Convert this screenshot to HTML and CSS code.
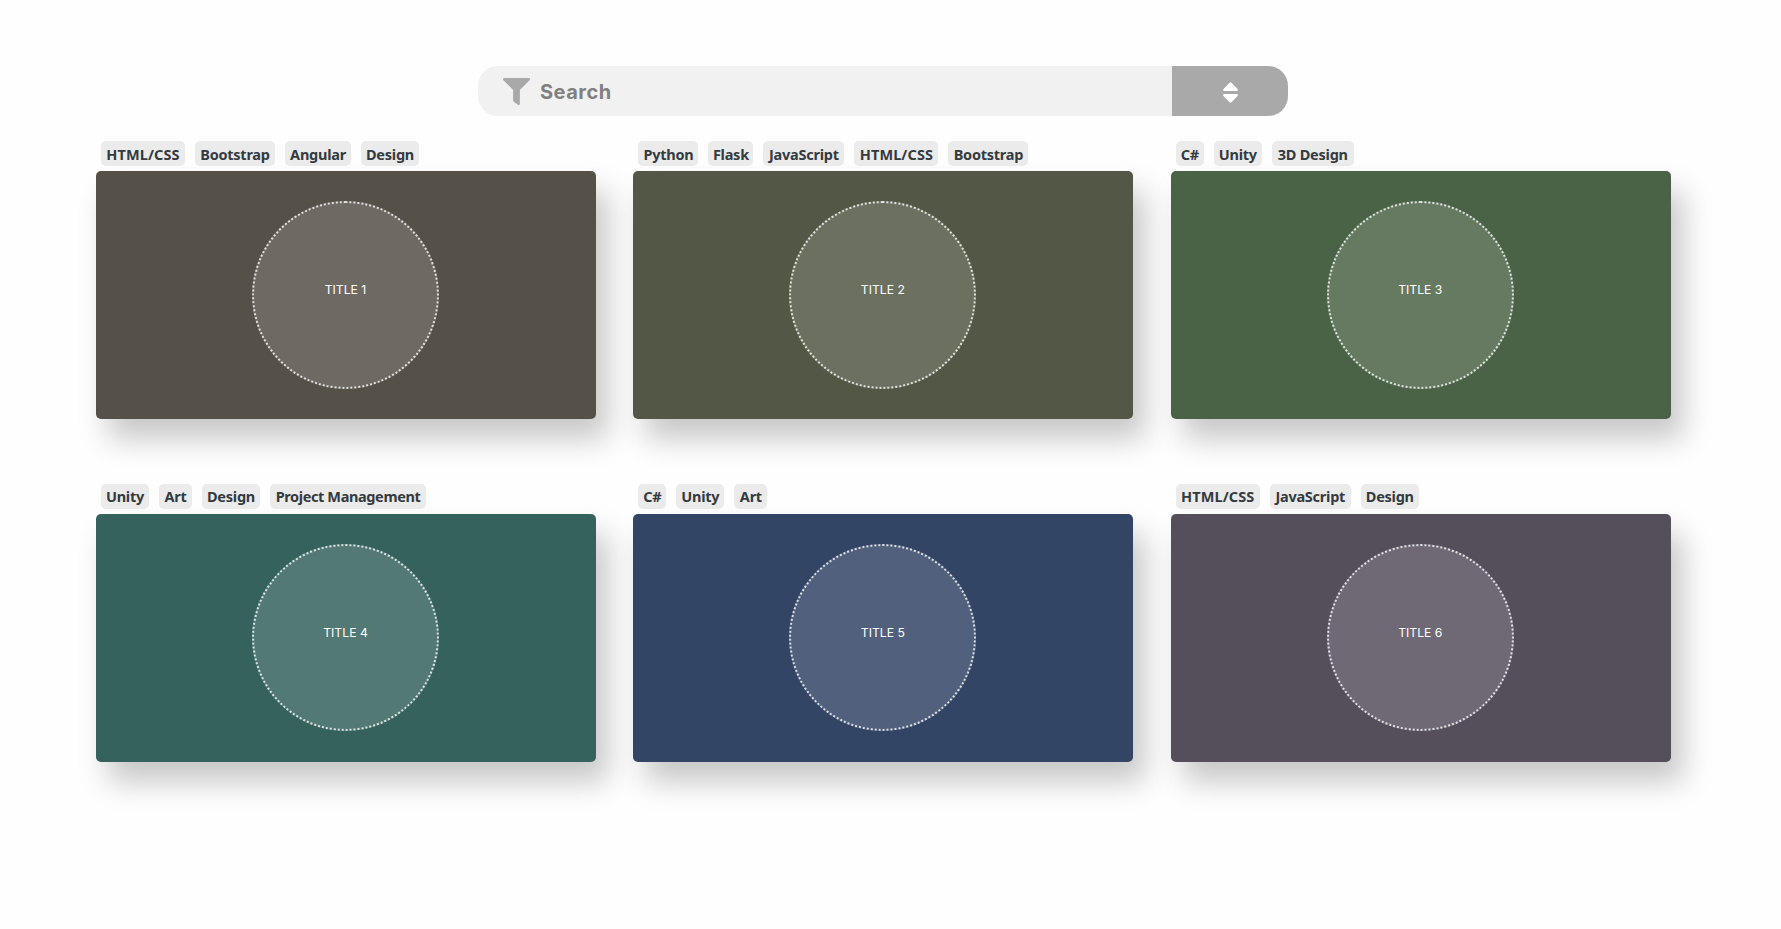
FILE: index.html
```html
<!DOCTYPE html>
<html lang="en">
<head>
<meta charset="utf-8">
<title>Projects</title>
<link rel="stylesheet" href="styles.css">
</head>
<body>
<form class="search">
  <label class="field">
    <svg class="funnel" viewBox="0 0 512 512"><path d="M488 0H24C3 0-8 26 7 41l185 185v206c0 8 4 15 10 20l80 55c16 11 38 0 38-19V226L505 41C520 26 509 0 488 0z"/></svg>
    <span class="placeholder">Search</span>
  </label>
  <button class="sort" type="button" aria-label="Sort">
    <svg class="sort-icon" viewBox="0 0 15 21"><path d="M1 9Q-.5 8.500 .5 7L6.500.7Q7.500-.2 8.500.7L14.500 7Q15.500 8.500 14 9zM1 12H14Q15.500 12.500 14.500 14L8.500 20.300Q7.500 21.200 6.500 20.300L.5 14Q-.5 12.500 1 12z"/></svg>
  </button>
</form>
<main class="grid">
  <section class="project">
    <div class="tags"><span class="tag html">HTML/CSS</span><span class="tag bootstrap">Bootstrap</span><span class="tag angular">Angular</span><span class="tag design">Design</span></div>
    <div class="card brown"><div class="circle"><span class="title">TITLE 1</span></div></div>
  </section>
  <section class="project">
    <div class="tags"><span class="tag python">Python</span><span class="tag flask">Flask</span><span class="tag javascript">JavaScript</span><span class="tag html">HTML/CSS</span><span class="tag bootstrap">Bootstrap</span></div>
    <div class="card olive"><div class="circle"><span class="title">TITLE 2</span></div></div>
  </section>
  <section class="project">
    <div class="tags"><span class="tag csharp">C#</span><span class="tag unity">Unity</span><span class="tag design3d">3D Design</span></div>
    <div class="card green"><div class="circle"><span class="title">TITLE 3</span></div></div>
  </section>
  <section class="project">
    <div class="tags lower"><span class="tag unity">Unity</span><span class="tag art">Art</span><span class="tag design">Design</span><span class="tag management">Project Management</span></div>
    <div class="card teal"><div class="circle"><span class="title">TITLE 4</span></div></div>
  </section>
  <section class="project">
    <div class="tags lower"><span class="tag csharp">C#</span><span class="tag unity">Unity</span><span class="tag art">Art</span></div>
    <div class="card blue"><div class="circle"><span class="title">TITLE 5</span></div></div>
  </section>
  <section class="project">
    <div class="tags lower"><span class="tag html">HTML/CSS</span><span class="tag javascript">JavaScript</span><span class="tag design">Design</span></div>
    <div class="card purple"><div class="circle"><span class="title">TITLE 6</span></div></div>
  </section>
</main>
</body>
</html>
```
FILE: styles.css
```css
* { box-sizing: border-box; }
body {
  margin: 0;
  height: 929px;
  overflow: hidden;
  padding: 66px 110px 0 96px;
  background: #fefefe;
  font-family: "Noto Sans", "Open Sans", sans-serif;
}
.search {
  display: flex;
  width: 810px;
  height: 50px;
  margin: 0 0 25px 382px;
  border-radius: 20px;
  overflow: hidden;
}
.field {
  display: flex;
  align-items: center;
  flex: 1;
  padding-left: 25px;
  background: #f1f1f1;
}
.funnel { width: 27px; height: 27px; fill: #a9a9a9; }
.placeholder {
  margin-left: 10px;
  padding-top: 2px;
  font: 700 20px/24px Inter, sans-serif;
  letter-spacing: .5px;
  color: #808080;
}
.sort {
  display: flex;
  align-items: center;
  justify-content: center;
  width: 116px;
  border: 0;
  padding: 3px 0 0;
  background: #a9a9a9;
}
.sort-icon { width: 15px; height: 21px; fill: #fff; }
.grid {
  display: grid;
  grid-template-columns: repeat(3, 500px);
  column-gap: 37.4px;
  row-gap: 65px;
}
.tags { display: flex; gap: 10px; padding: 0 5px 5px; }
.tag {
  display: flex;
  justify-content: center;
  height: 25px;
  border-radius: 5px;
  background: #ebebeb;
  color: #343a40;
  font-size: 14.5px;
  font-weight: 700;
  line-height: 26px;
  letter-spacing: -.25px;
  white-space: nowrap;
}
.lower .tag { line-height: 25px; }
.html { width: 84px; letter-spacing: .1px; }
.bootstrap { width: 80px; }
.angular { width: 66px; }
.design { width: 58px; }
.python { width: 60px; }
.flask { width: 45px; }
.javascript { width: 81px; }
.csharp { width: 28px; }
.unity { width: 48px; }
.design3d { width: 82px; }
.art { width: 33px; }
.management { width: 156px; letter-spacing: -.38px; }
.card {
  display: flex;
  align-items: center;
  justify-content: center;
  height: 248px;
  border-radius: 5px;
  box-shadow: 12px 20px 30px rgba(0, 0, 0, .22);
}
.brown { background: #555048; }
.olive { background: #525845; }
.green { background: #4a6346; }
.teal { background: #35625c; }
.blue { background: #334565; }
.purple { background: #554f5c; }
.circle {
  display: flex;
  align-items: center;
  justify-content: center;
  width: 187px;
  height: 188px;
  margin-right: 1px;
  padding-bottom: 10px;
  border: 2px dotted rgba(255, 255, 255, .8);
  border-radius: 50%;
  background: rgba(255, 255, 255, .15);
}
.lower + .card .circle { height: 187px; margin-bottom: 1px; }
.title { color: #fff; font: 400 12.200px/16px Inter, sans-serif; }
```
